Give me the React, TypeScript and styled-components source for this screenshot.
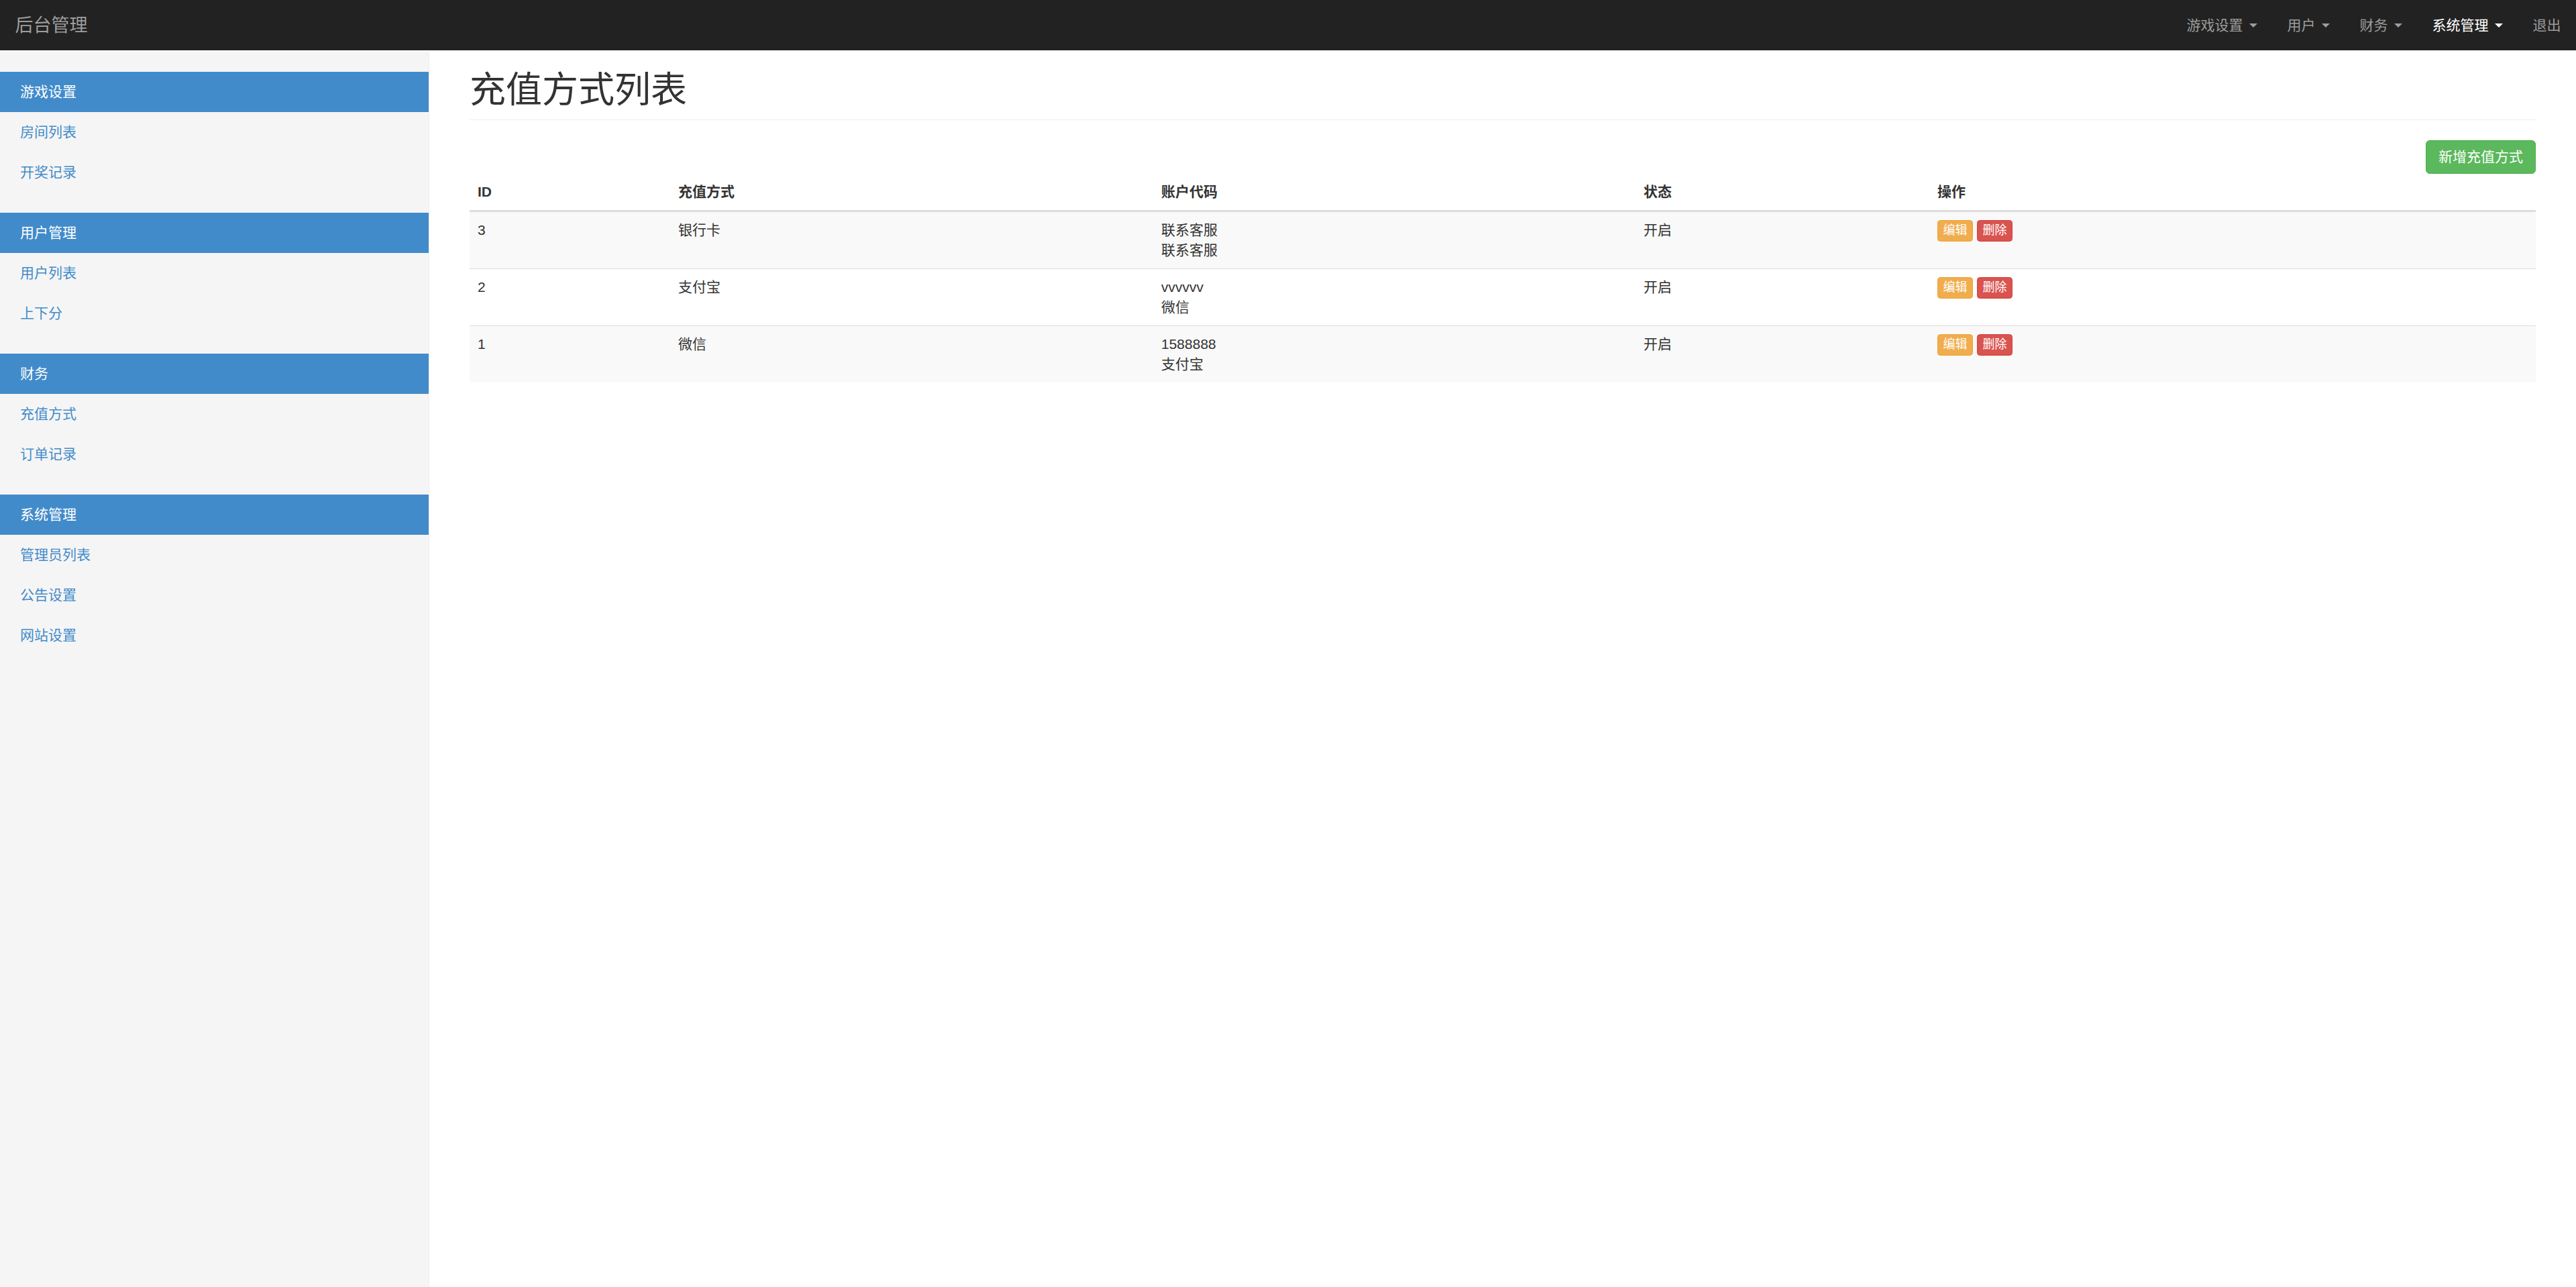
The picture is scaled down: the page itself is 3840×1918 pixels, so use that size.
import styled, { createGlobalStyle } from 'styled-components';

const GlobalStyle = createGlobalStyle`
  html, body {
    margin: 0;
    padding: 0;
    background: #fff;
  }

  body {
    font-family: "Liberation Sans", "Noto Sans CJK SC", sans-serif;
    font-size: 21px;
    line-height: 30px;
    color: #333;
  }

  * {
    box-sizing: border-box;
  }
`;

const Navbar = styled.header`
  height: 75px;
  background: #222;
  display: flex;
  align-items: center;
  justify-content: space-between;
`;

const Brand = styled.a`
  padding-left: 22.5px;
  font-size: 27px;
  line-height: 30px;
  color: #9d9d9d;
  text-decoration: none;
`;

const NavMenu = styled.nav`
  display: flex;
  align-items: center;
`;

const NavLink = styled.a<{ $active?: boolean }>`
  padding: 0 22.5px;
  font-size: 21px;
  line-height: 30px;
  color: ${(p) => (p.$active ? '#fff' : '#9d9d9d')};
  text-decoration: none;
  display: flex;
  align-items: center;
`;

const Caret = styled.span`
  display: inline-block;
  width: 0;
  height: 0;
  margin-left: 9px;
  border-top: 6px solid currentColor;
  border-left: 6px solid transparent;
  border-right: 6px solid transparent;
`;

const Layout = styled.div`
  display: flex;
  align-items: stretch;
  padding-top: 2px;
  min-height: calc(100vh - 75px);
`;

const Sidebar = styled.aside`
  width: 640px;
  flex-shrink: 0;
  background: #f5f5f5;
  border-right: 1px solid #eee;
  padding-top: 30px;
`;

const SideGroup = styled.ul`
  list-style: none;
  margin: 0 0 30px;
  padding: 0;
`;

const SideHeader = styled.li`
  padding: 15px 30px;
  background: #428bca;
  color: #fff;
`;

const SideLink = styled.li`
  padding: 15px 30px;
  color: #428bca;
`;

const Main = styled.main`
  flex: 1;
  padding: 28px 60px 30px;
`;

const PageHeader = styled.h1`
  margin: 0 0 30px;
  padding-bottom: 13.5px;
  border-bottom: 1px solid #eee;
  font-size: 54px;
  line-height: 59.4px;
  font-weight: 400;
  color: #333;
`;

const Toolbar = styled.div`
  display: flex;
  justify-content: flex-end;
`;

const AddButton = styled.button`
  font-family: inherit;
  font-size: 21px;
  line-height: 30px;
  padding: 9px 18px;
  color: #fff;
  background: #5cb85c;
  border: 1px solid #4cae4c;
  border-radius: 6px;
`;

const Table = styled.table`
  width: 100%;
  table-layout: fixed;
  border-collapse: collapse;
  margin-bottom: 30px;
`;

const Col = styled.col<{ $width?: number }>`
  width: ${(p) => (p.$width ? `${p.$width}px` : 'auto')};
`;

const Th = styled.th`
  padding: 12px;
  text-align: left;
  font-weight: bold;
  vertical-align: bottom;
  border-bottom: 3px solid #ddd;
`;

const Row = styled.tr`
  &:nth-child(odd) {
    background: #f9f9f9;
  }
`;

const Td = styled.td`
  padding: 12px;
  vertical-align: top;
  border-top: 1px solid #ddd;
`;

const Actions = styled.div`
  display: flex;
  gap: 6px;
`;

const MiniButton = styled.button<{ $kind: 'warning' | 'danger' }>`
  font-family: inherit;
  font-size: 18px;
  line-height: 27px;
  padding: 1.5px 7.5px;
  color: #fff;
  border-radius: 4.5px;
  background: ${(p) => (p.$kind === 'warning' ? '#f0ad4e' : '#d9534f')};
  border: 1px solid ${(p) => (p.$kind === 'warning' ? '#eea236' : '#d43f3a')};
`;

const navItems = [
  { label: '游戏设置', dropdown: true },
  { label: '用户', dropdown: true },
  { label: '财务', dropdown: true },
  { label: '系统管理', dropdown: true, active: true },
  { label: '退出' },
];

const sideGroups = [
  { title: '游戏设置', links: ['房间列表', '开奖记录'] },
  { title: '用户管理', links: ['用户列表', '上下分'] },
  { title: '财务', links: ['充值方式', '订单记录'] },
  { title: '系统管理', links: ['管理员列表', '公告设置', '网站设置'] },
];

const methods = [
  { id: 3, name: '银行卡', codes: ['联系客服', '联系客服'], status: '开启' },
  { id: 2, name: '支付宝', codes: ['vvvvvv', '微信'], status: '开启' },
  { id: 1, name: '微信', codes: ['1588888', '支付宝'], status: '开启' },
];

const App = () => {
  return (
    <>
      <GlobalStyle />
      <Navbar>
        <Brand>后台管理</Brand>
        <NavMenu>
          {navItems.map((item) => (
            <NavLink key={item.label} $active={item.active}>
              {item.label}
              {item.dropdown && <Caret />}
            </NavLink>
          ))}
        </NavMenu>
      </Navbar>
      <Layout>
        <Sidebar>
          {sideGroups.map((group) => (
            <SideGroup key={group.title}>
              <SideHeader>{group.title}</SideHeader>
              {group.links.map((link) => (
                <SideLink key={link}>{link}</SideLink>
              ))}
            </SideGroup>
          ))}
        </Sidebar>
        <Main>
          <PageHeader>充值方式列表</PageHeader>
          <Toolbar>
            <AddButton>新增充值方式</AddButton>
          </Toolbar>
          <Table>
            <colgroup>
              <Col $width={299} />
              <Col $width={720} />
              <Col $width={719} />
              <Col $width={438} />
              <Col />
            </colgroup>
            <thead>
              <tr>
                <Th>ID</Th>
                <Th>充值方式</Th>
                <Th>账户代码</Th>
                <Th>状态</Th>
                <Th>操作</Th>
              </tr>
            </thead>
            <tbody>
              {methods.map((m) => (
                <Row key={m.id}>
                  <Td>{m.id}</Td>
                  <Td>{m.name}</Td>
                  <Td>
                    {m.codes.map((c, i) => (
                      <div key={i}>{c}</div>
                    ))}
                  </Td>
                  <Td>{m.status}</Td>
                  <Td>
                    <Actions>
                      <MiniButton $kind="warning">编辑</MiniButton>
                      <MiniButton $kind="danger">删除</MiniButton>
                    </Actions>
                  </Td>
                </Row>
              ))}
            </tbody>
          </Table>
        </Main>
      </Layout>
    </>
  );
};

export default App;
